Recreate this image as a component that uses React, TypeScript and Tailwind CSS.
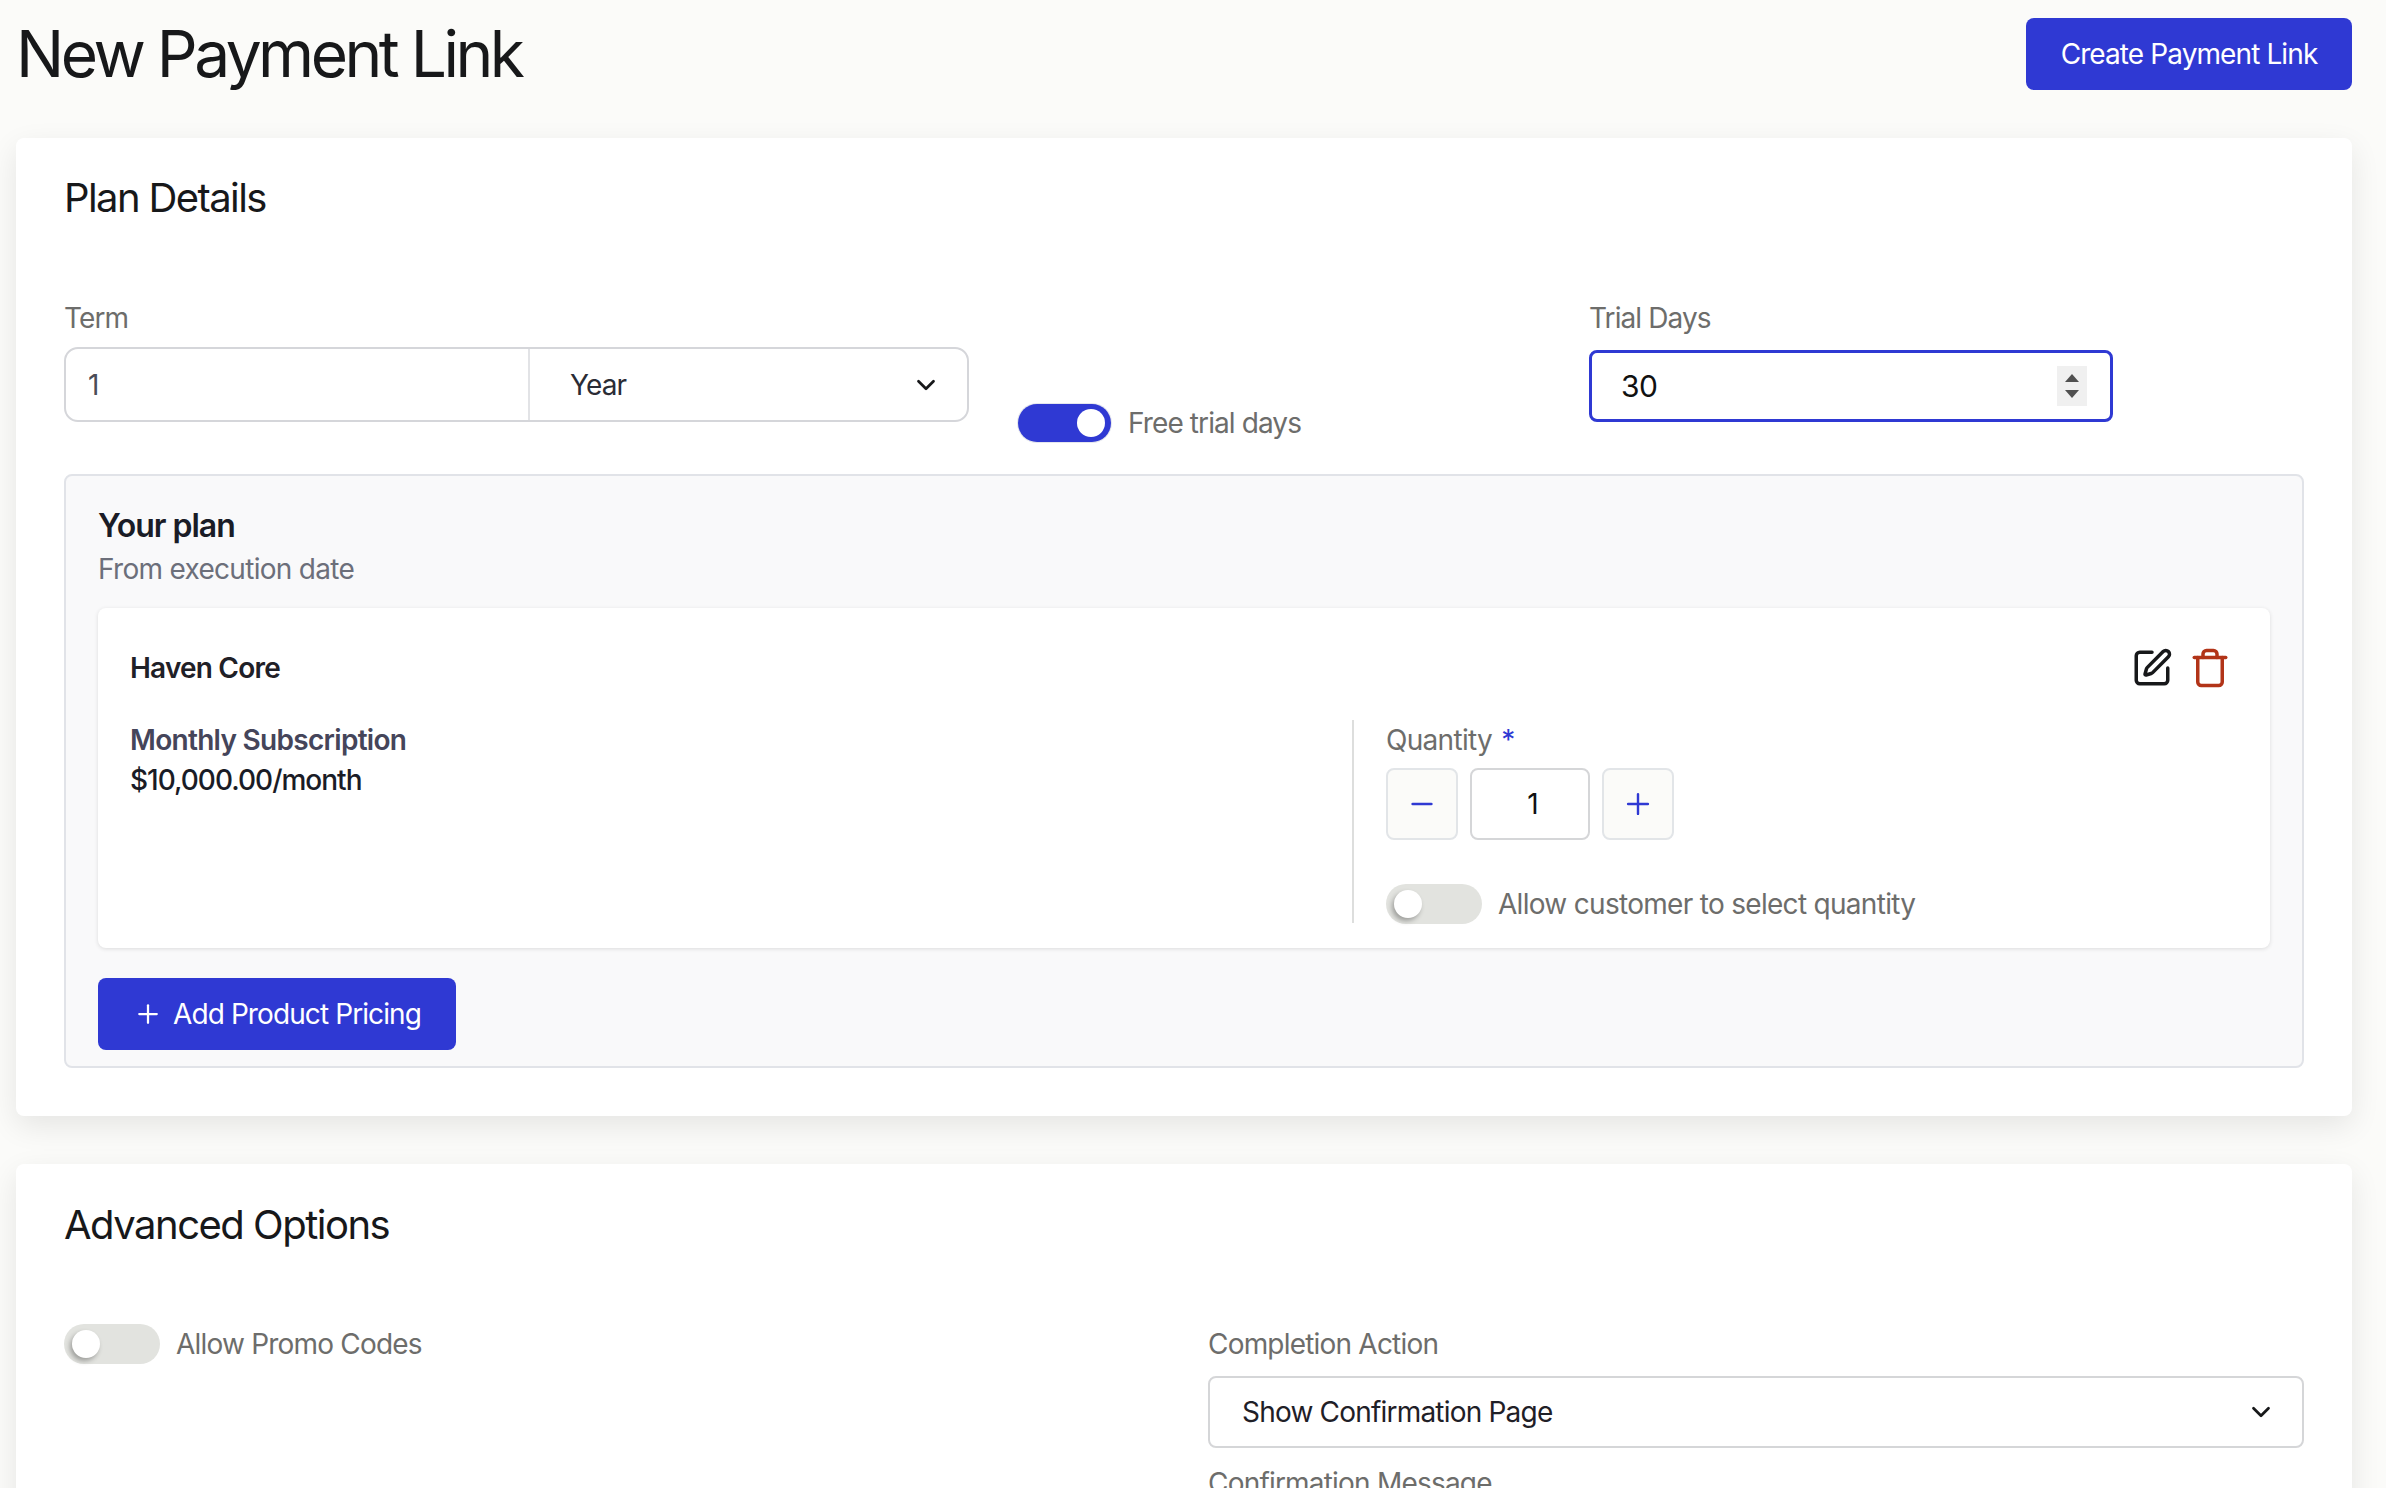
import { ChevronDown, Minus, Plus, SquarePen, Trash } from "lucide-react";

const Toggle = ({ on = false }: { on?: boolean }) => (
  <div
    className={`flex shrink-0 items-center rounded-full ${
      on
        ? "h-[38px] w-[93px] justify-end bg-[#2f39d3] px-1.5 shadow-[0_0_0_1px_#e4e6ee]"
        : "h-10 w-24 justify-start bg-[#e2e3df] px-2"
    }`}
  >
    <div className={`h-7 w-7 rounded-full bg-white ${on ? "" : "shadow-[-2px_3px_5px_rgba(0,0,0,0.3)]"}`} />
  </div>
);

const PrimaryButton = ({ children, className = "" }: { children: React.ReactNode; className?: string }) => (
  <button className={`flex h-[72px] items-center justify-center rounded-lg bg-[#2f39d3] text-[28px] tracking-[-0.9px] text-white ${className}`}>
    {children}
  </button>
);

const StepButton = ({ children }: { children: React.ReactNode }) => (
  <button className="flex h-[72px] w-[72px] items-center justify-center rounded-lg border-2 border-[#e2e5e8] bg-[#fbfbf9] text-[#2f39d3]">
    {children}
  </button>
);

const App = () => {
  return (
    <div className="h-[1488px] overflow-hidden bg-[#fbfbf9] pl-4 pr-[34px] font-['Inter',sans-serif] text-[#17181a]">
      <header className="flex items-center justify-between pb-12 pt-[18px]">
        <h1 className="text-[64px] font-normal leading-[72px] tracking-[-3.5px]">New Payment Link</h1>
        <PrimaryButton className="w-[326px]">Create Payment Link</PrimaryButton>
      </header>

      <section className="rounded-lg bg-white px-12 pb-12 pt-[36px] shadow-[0_10px_30px_rgba(0,0,0,0.09)]">
        <h2 className="text-[40px] font-normal leading-12 tracking-[-1.6px]">Plan Details</h2>

        <div className="mt-[78px] flex h-[177px] items-start">
          <div className="w-[905px]">
            <label className="block text-[28px] leading-9 tracking-[-0.9px] text-[#6d6d6b]">Term</label>
            <div className="mt-[11px] flex h-[75px] items-stretch rounded-[14px] border-2 border-[#d5d6da]">
              <div className="flex w-[464px] items-center border-r-2 border-[#e2e3e6] pl-[22px] text-[28px] text-[#4a4d57]">1</div>
              <div className="flex flex-1 items-center justify-between pl-10 pr-[26px] text-[28px] tracking-[-0.9px] text-[#2a2c35]">
                <span>Year</span>
                <ChevronDown size={30} strokeWidth={2.2} className="text-[#17181a]" />
              </div>
            </div>
          </div>

          <div className="ml-[49px] mt-[102px] flex w-[571px] items-center gap-[17px]">
            <Toggle on />
            <span className="text-[28px] tracking-[-0.9px] text-[#6d6d6b]">Free trial days</span>
          </div>

          <div className="w-[524px]">
            <label className="block text-[28px] leading-9 tracking-[-0.9px] text-[#6d6d6b]">Trial Days</label>
            <div className="mt-3.5 flex h-[72px] items-center justify-between rounded-lg border-[3px] border-[#2f39d3] pl-[29px] pr-[23px] text-[30px] tracking-[-0.5px] text-[#111]">
              <span>30</span>
              <div className="flex h-10 w-[30px] flex-col items-center justify-center gap-2 bg-[#f0f0f0]">
                <div className="h-0 w-0 border-x-[7px] border-b-[8px] border-x-transparent border-b-[#505050]" />
                <div className="h-0 w-0 border-x-[7px] border-t-[8px] border-x-transparent border-t-[#505050]" />
              </div>
            </div>
          </div>
        </div>

        <div className="mt-[-3px] rounded-lg border-2 border-[#e1e3e8] bg-[#f9f9fa] px-8 pb-4 pt-[30px]">
          <h3 className="text-[32px] font-semibold leading-10 tracking-[-1px] text-[#1a1c26]">Your plan</h3>
          <p className="mt-[5px] text-[28px] leading-9 tracking-[-0.7px] text-[#6c6f7a]">From execution date</p>

          <div className="mt-[21px] h-[340px] rounded-lg bg-white px-8 shadow-[0_1px_4px_rgba(0,0,0,0.12)]">
            <div className="flex h-[112px] items-center justify-between pt-2">
              <span className="text-[28px] font-semibold tracking-[-0.8px] text-[#1f2027]">Haven Core</span>
              <div className="mr-[7px] flex items-center gap-4">
                <SquarePen size={42} strokeWidth={2} className="text-[#17181a]" />
                <Trash size={42} strokeWidth={2} className="text-[#b23418]" />
              </div>
            </div>

            <div className="flex">
              <div className="w-[1222px]">
                <p className="text-[28px] font-semibold leading-10 tracking-[-0.7px] text-[#45455a]">Monthly Subscription</p>
                <p className="text-[28px] font-medium leading-10 tracking-[-1px] text-[#1a1c26]">$10,000.00/month</p>
              </div>

              <div className="h-[203px] border-l-2 border-[#dddedd] pl-8">
                <div className="text-[28px] leading-10 tracking-[-0.7px] text-[#6d6d6b]">
                  Quantity <span className="ml-0.5 text-[#2f39d3]">*</span>
                </div>
                <div className="mt-2 flex items-center gap-3">
                  <StepButton>
                    <Minus size={32} strokeWidth={2} />
                  </StepButton>
                  <div className="flex h-[72px] w-[120px] items-center justify-center rounded-lg border-2 border-[#d5d6d8] pl-1.5 text-[28px] text-[#111]">1</div>
                  <StepButton>
                    <Plus size={34} strokeWidth={1.7} />
                  </StepButton>
                </div>
                <div className="mt-[43px] flex items-center gap-4">
                  <Toggle />
                  <span className="text-[28px] tracking-[-0.7px] text-[#6d6d6b]">Allow customer to select quantity</span>
                </div>
              </div>
            </div>
          </div>

          <PrimaryButton className="mt-[30px] w-[358px] gap-2.5">
            <Plus size={30} strokeWidth={1.8} />
            Add Product Pricing
          </PrimaryButton>
        </div>
      </section>

      <section className="mt-12 rounded-lg bg-white px-12 pb-12 pt-[37px] shadow-[0_10px_30px_rgba(0,0,0,0.09)]">
        <h2 className="text-[40px] font-normal leading-12 tracking-[-1.5px]">Advanced Options</h2>

        <div className="mt-[74px] flex items-start">
          <div className="flex w-[1144px] items-center gap-4">
            <Toggle />
            <span className="text-[28px] tracking-[-0.8px] text-[#6d6d6b]">Allow Promo Codes</span>
          </div>
          <div className="flex-1 pt-[3px]">
            <label className="block text-[28px] leading-9 tracking-[-0.8px] text-[#6d6d6b]">Completion Action</label>
            <div className="mt-[14px] flex h-[72px] items-center justify-between rounded-lg border-2 border-[#d5d6d8] pl-8 pr-[26px] text-[28px] tracking-[-0.8px] text-[#1f2027]">
              <span>Show Confirmation Page</span>
              <ChevronDown size={30} strokeWidth={2.2} className="text-[#17181a]" />
            </div>
            <label className="mt-[17px] block text-[28px] leading-9 tracking-[-0.8px] text-[#6d6d6b]">Confirmation Message</label>
          </div>
        </div>
      </section>
    </div>
  );
};

export default App;
